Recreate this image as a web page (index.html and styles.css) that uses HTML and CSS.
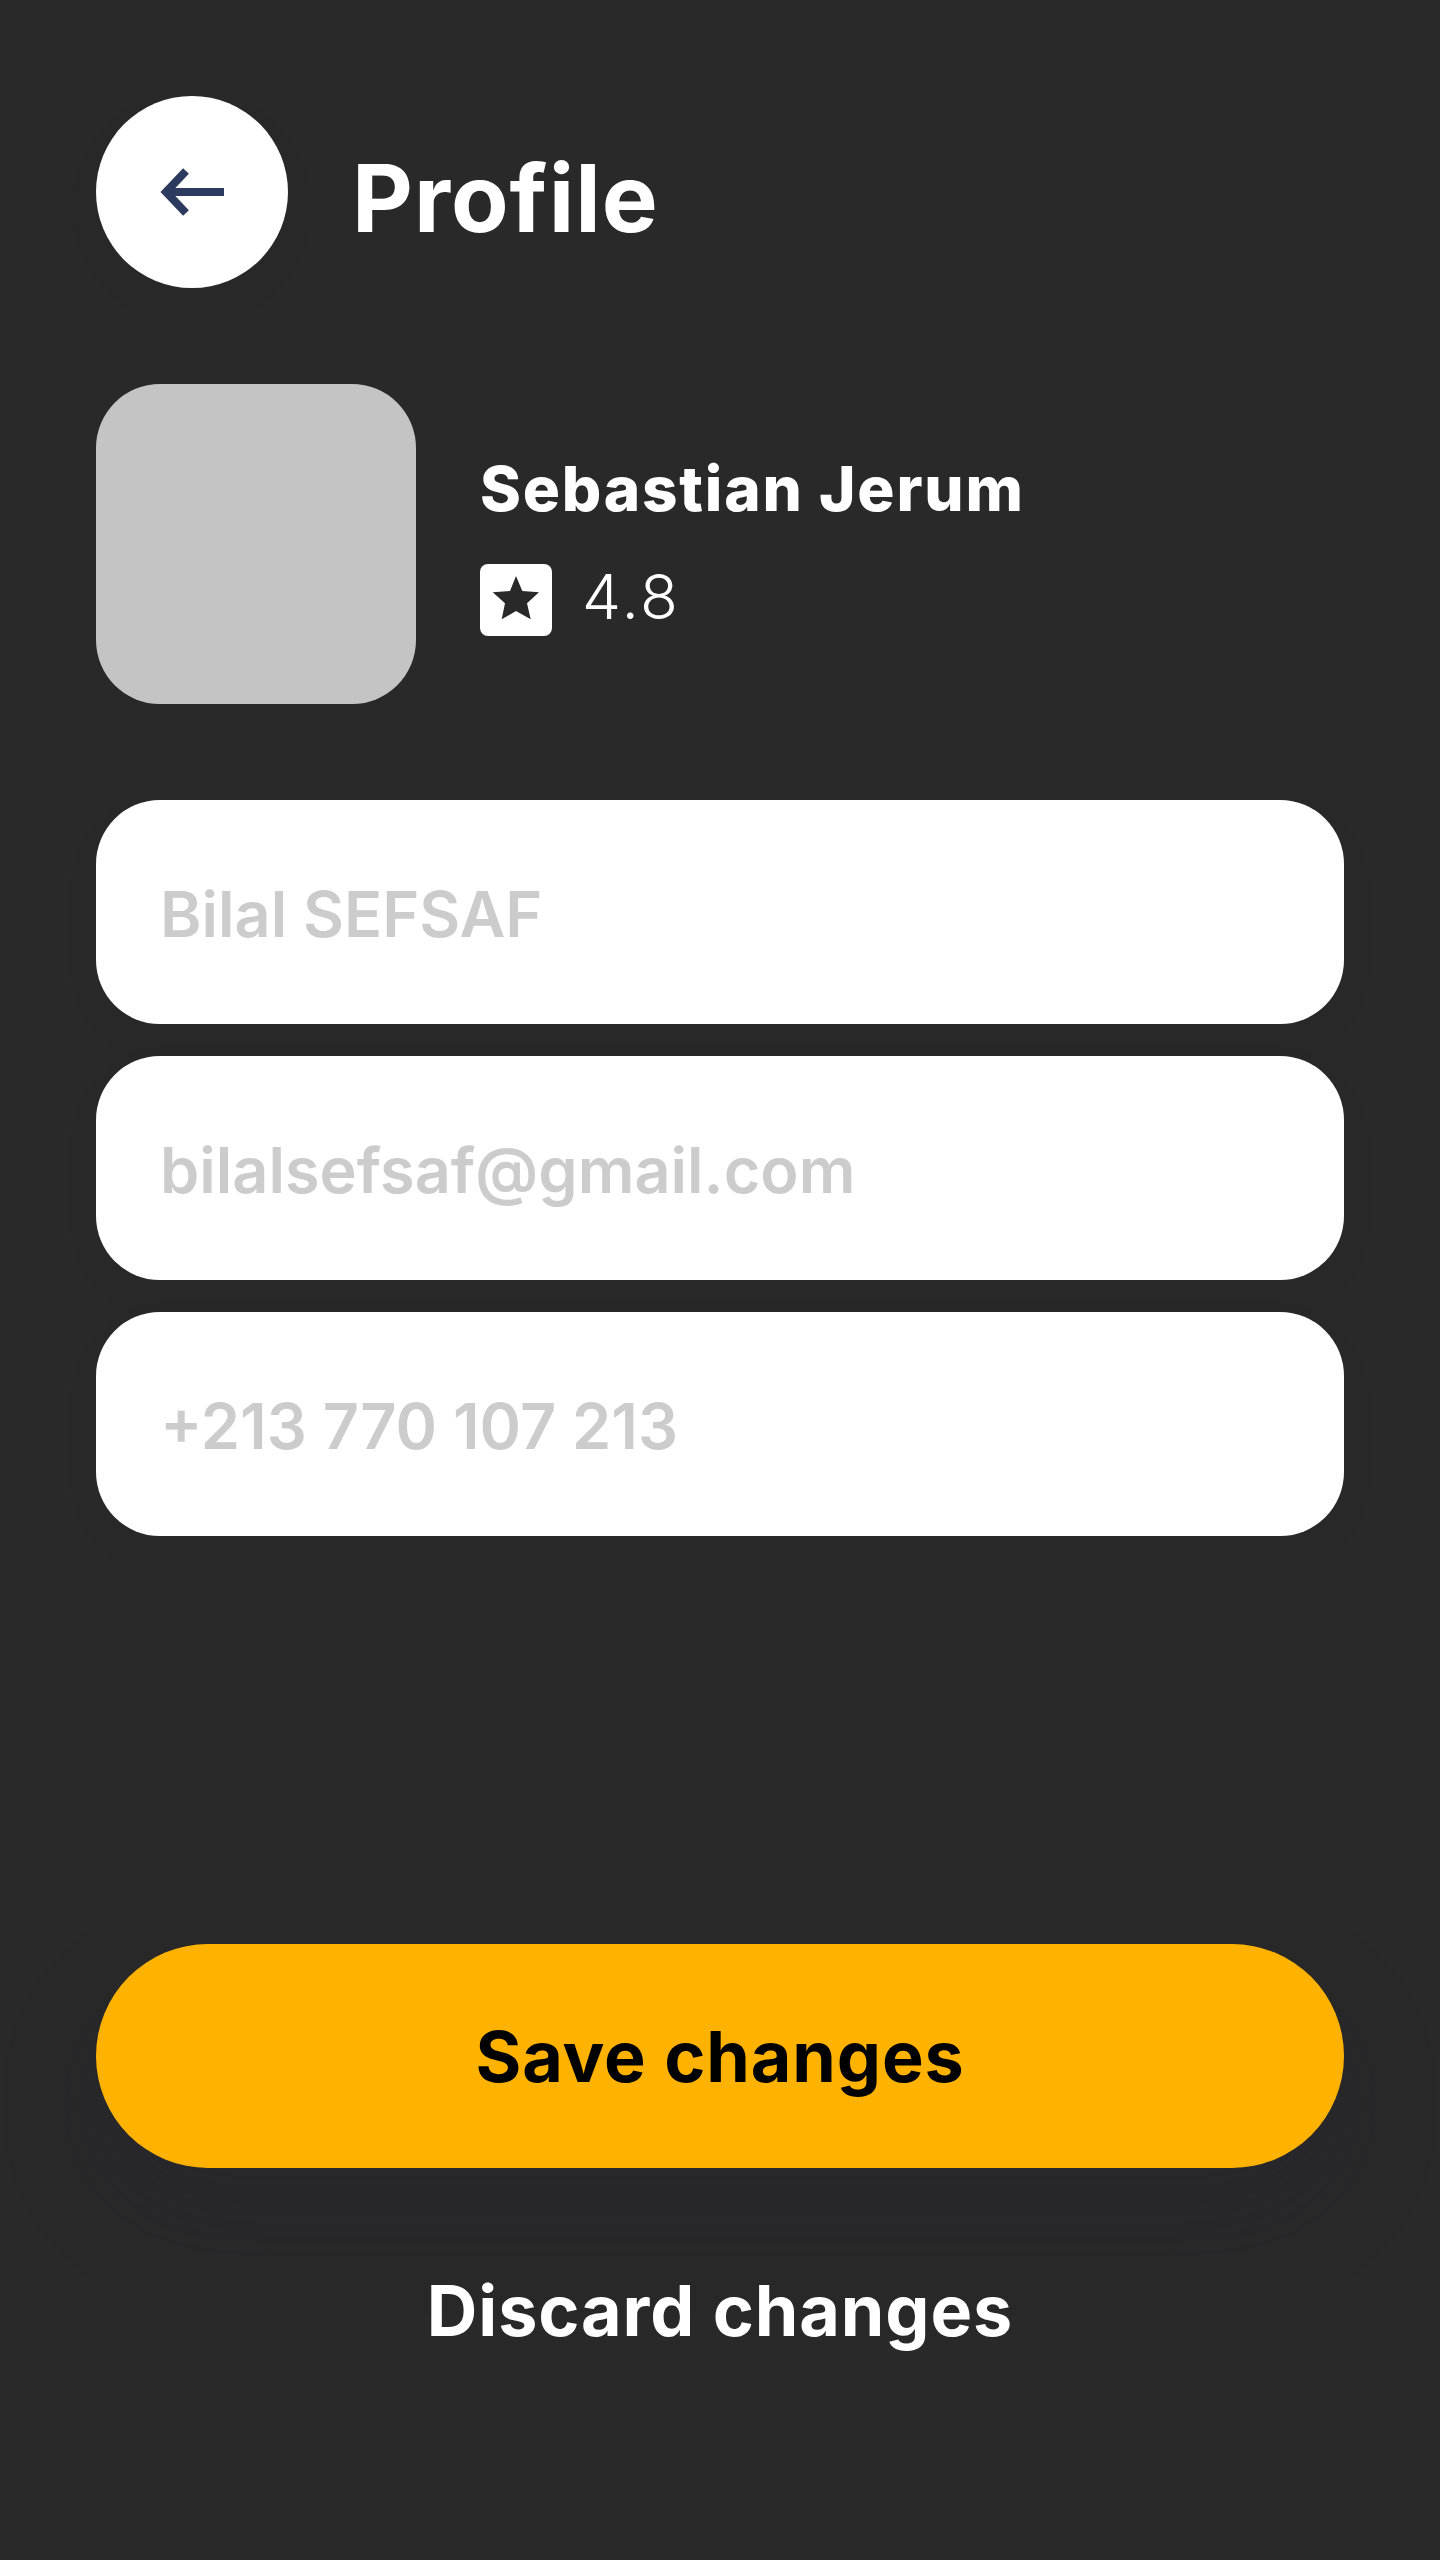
FILE: index.html
```html
<!DOCTYPE html>
<html lang="en">
<head>
    <meta charset="UTF-8">
    <title>Profile</title>
    <link rel="stylesheet" href="styles.css">
</head>
<body>
    <div class="page">
        <div class="header">
            <div class="back-button">
                <svg class="back-icon" viewBox="0 0 64 48" width="64" height="48">
                    <path d="M64 24H6M26 3L6 24L26 45" fill="none" stroke="#2c3a5e" stroke-width="8"/>
                </svg>
            </div>
            <div class="title">Profile</div>
        </div>

        <div class="profile">
            <div class="avatar"></div>
            <div class="profile-info">
                <div class="name">Sebastian Jerum</div>
                <div class="rating">
                    <div class="star-box">
                        <svg viewBox="0 0 72 72" width="72" height="72">
                            <path d="M36 12L42.3 27L59 28.3L47 39.3L50.700 55.300L36 47L21.700 55.300L25 39.300L12.700 28.300L30 27Z" fill="#292929"/>
                        </svg>
                    </div>
                    <div class="rating-value">4.8</div>
                </div>
            </div>
        </div>

        <div class="fields">
            <div class="field">Bilal SEFSAF</div>
            <div class="field">bilalsefsaf@gmail.com</div>
            <div class="field">+213 770 107 213</div>
        </div>

        <div class="actions">
            <div class="save-button">Save changes</div>
            <div class="discard-button">Discard changes</div>
        </div>
    </div>
</body>
</html>
```

FILE: styles.css
```css
body {
    margin: 0;
    background-color: #292929;
    font-family: Inter, "Liberation Sans", sans-serif;
    color: white;
}

.page {
    height: 2560px;
    box-sizing: border-box;
    padding: 96px;
    display: flex;
    flex-direction: column;
}

.header {
    display: flex;
    align-items: center;
    gap: 64px;
}

.back-button {
    width: 192px;
    height: 192px;
    border-radius: 50%;
    background-color: white;
    display: flex;
    justify-content: center;
    align-items: center;
    box-shadow: 0 16px 48px rgba(0, 0, 0, 0.03);
}

.back-icon {
    display: block;
}

.title {
    font-size: 94px;
    font-weight: 700;
    line-height: 108px;
    margin-top: 12px;
    letter-spacing: 1px;
}

.profile {
    display: flex;
    align-items: center;
    gap: 64px;
    margin-top: 96px;
}

.avatar {
    width: 320px;
    height: 320px;
    border-radius: 64px;
    background-color: #c4c4c4;
}

.name {
    font-size: 62px;
    font-weight: 800;
    line-height: 72px;
    letter-spacing: 1.8px;
}

.rating {
    display: flex;
    align-items: center;
    gap: 30px;
    margin-top: 39px;
}

.star-box {
    width: 72px;
    height: 72px;
    border-radius: 8px;
    background-color: white;
}

.star-box svg {
    display: block;
}

.rating-value {
    font-size: 62px;
    font-weight: 300;
    line-height: 66px;
    margin-top: -6px;
    letter-spacing: 2.500px;
}

.fields {
    display: flex;
    flex-direction: column;
    gap: 32px;
    margin-top: 96px;
}

.field {
    height: 224px;
    box-sizing: border-box;
    padding: 4px 64px 0;
    display: flex;
    align-items: center;
    border-radius: 64px;
    background-color: white;
    color: #cccccc;
    font-size: 63px;
    font-weight: 600;
    box-shadow: 0 16px 48px rgba(0, 0, 0, 0.03);
}

.actions {
    display: flex;
    flex-direction: column;
    margin-top: 408px;
}

.save-button,
.discard-button {
    height: 224px;
    display: flex;
    justify-content: center;
    align-items: center;
    font-size: 70px;
    font-weight: 700;
    letter-spacing: 0.9px;
}

.save-button {
    border-radius: 112px;
    background-color: #ffb200;
    color: black;
    box-shadow: 0 48px 96px rgba(34, 34, 60, 0.25);
}

.discard-button {
    margin-top: 30px;
    color: white;
}
```
